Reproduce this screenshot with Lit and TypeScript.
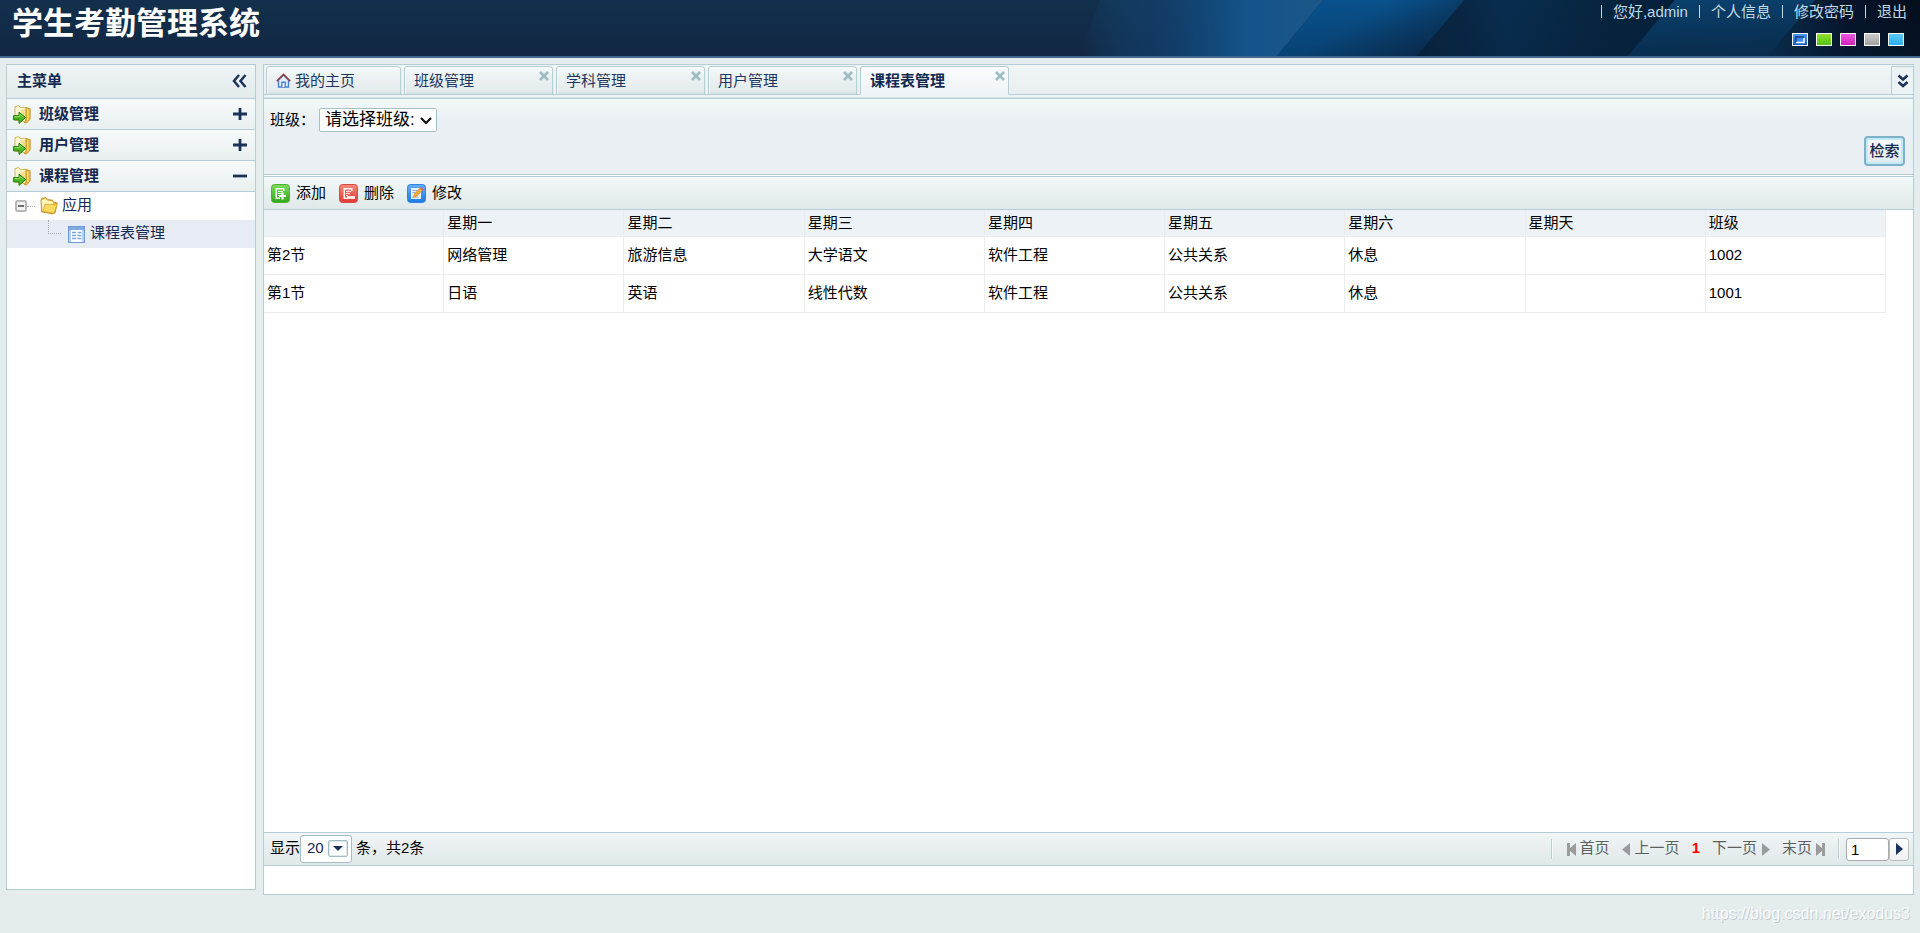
import { LitElement, html, css, svg } from "lit";
import { customElement, property, state } from "lit/decorators.js";
import { classMap } from "lit/directives/class-map.js";

const houseIcon = html`<svg width="15" height="15" viewBox="0 0 15 15" aria-hidden="true">
  <path d="M2.5 7v7h10V7l-5-5z" fill="#e3eefc" stroke="#4a7fd0" stroke-width="1.4" />
  <path d="M5.8 14V9.2h3.4V14" fill="#fff" stroke="#4a7fd0" stroke-width="1.4" />
  <path d="M.8 8.2 7.5 1.4l6.7 6.8" fill="none" stroke="#8c4448" stroke-width="1.7" />
</svg>`;

const sectionIcon = html`<svg width="19" height="19" viewBox="0 0 19 19" aria-hidden="true">
  <path d="M2 1.6 5.600.6l1.800 1.900 5.600-.2V17L2 15z" fill="#fdf6cf" stroke="#d3ae52" stroke-width=".9" />
  <path d="M13 2.400l4.200 1.400v10.200L13.600 18l-2.600-.6 2-1.800z" fill="#eab93a" stroke="#c2922c" stroke-width=".8" />
  <path d="M14.800 4.600v10.400" stroke="#fbe490" stroke-width="1.100" />
  <path d="M8 4.500h4v10H9z" fill="#f7e08a" />
  <path d="M.6 10.600h5.400V7.200l6.600 5.400-6.600 5.800v-3.500H.6z" fill="#4cb822" stroke="#267a10" />
  <path d="M1.400 11.500h5.400V9.300l3.600 3" fill="none" stroke="#98e268" stroke-width=".9" />
</svg>`;

const folderIcon = html`<svg width="19" height="18" viewBox="0 0 19 18" aria-hidden="true">
  <path d="M1 3 2 1.2l4-.6 1.600 2 5 .6.800 2 3.800.8-2 9.600-2.200 1.300-11.400-2z" fill="#e6b53f" stroke="#bd8a26" stroke-width=".9" />
  <path d="M1.600 3.200 5.600 1.600l1.500 2 6 1 .3 11.400-11-2z" fill="#fff6b8" />
  <path d="M5 7.200 14.400 7.600l3-1.400-3.200 10L3 14.400z" fill="#f9da5e" stroke="#cf9c2c" stroke-width=".7" />
</svg>`;

const tableIcon = html`<svg width="17" height="17" viewBox="0 0 17 17" aria-hidden="true">
  <rect x=".5" y=".5" width="16" height="16" fill="#fff" stroke="#6f9ad6" />
  <path d="M1 1h15v3H1z" fill="#7fabe4" />
  <path d="M1 4h2v12H1zM14 4h2v12h-2z" fill="#b4d0f2" />
  <path d="M4 6.5h4M9.5 6.5h4M4 9.5h4M9.5 9.5h4M4 12.5h4M9.5 12.5h4" stroke="#7da5dd" stroke-width="1.4" />
</svg>`;

const sheet = svg`<path d="M4.500 4h9v3H12V5.500H6v8h3V15H4.500z" fill="#fff" opacity=".92" />
  <path d="M7 7.500h5M7 9.500h4M7 11.500h2" stroke="#fff" stroke-width="1.200" opacity=".85" />`;

const actionIcons = {
  add: html`<svg width="19" height="19" viewBox="0 0 19 19" aria-hidden="true">
    <defs><linearGradient id="g" x2="0" y2="1"><stop stop-color="#7ddc5c" /><stop offset="1" stop-color="#2fa81c" /></linearGradient></defs>
    <rect x=".5" y=".5" width="18" height="18" rx="3" fill="url(#g)" stroke="#4db32e" />
    ${sheet}<path d="M11.500 8.500v7M8 12h7" stroke="#fff" stroke-width="2.200" />
  </svg>`,
  remove: html`<svg width="19" height="19" viewBox="0 0 19 19" aria-hidden="true">
    <defs><linearGradient id="r" x2="0" y2="1"><stop stop-color="#f68a7c" /><stop offset="1" stop-color="#de3a34" /></linearGradient></defs>
    <rect x=".5" y=".5" width="18" height="18" rx="3" fill="url(#r)" stroke="#dc4844" />
    ${sheet}<path d="M8 13.500h8" stroke="#fff" stroke-width="2.600" />
  </svg>`,
  edit: html`<svg width="19" height="19" viewBox="0 0 19 19" aria-hidden="true">
    <defs><linearGradient id="b" x2="0" y2="1"><stop stop-color="#62aef8" /><stop offset="1" stop-color="#1f7ae2" /></linearGradient></defs>
    <rect x=".5" y=".5" width="18" height="18" rx="3" fill="url(#b)" stroke="#2f83e4" />
    <path d="M4 4h10v11H4z" fill="#e6eef6" />
    <path d="M5.500 6.500h5M5.500 8.500h3M5.500 13h6" stroke="#8fb2d8" />
    <path d="m6.500 13.200.8-3.200 5.700-6 2.300 2.200-5.600 6z" fill="#f5ae35" stroke="#c9801f" stroke-width=".6" />
    <path d="m13 4.300 1.200-1.200 2.300 2.200-1.200 1.200z" fill="#e8605a" />
  </svg>`,
};

const closeIcon = html`<svg width="10" height="10" viewBox="0 0 10 10" aria-hidden="true">
  <path d="M1 1l8 8M9 1 1 9" stroke="#9dbcc4" stroke-width="2.600" />
</svg>`;

const triangle = (d: string) => html`<svg width="9" height="15" viewBox="0 0 9 15" aria-hidden="true"><path d=${d} fill="#9b9b9b" /></svg>`;

@customElement("site-header")
export class SiteHeader extends LitElement {
  @state() private theme = "深蓝";
  private links = ["您好,admin", "个人信息", "修改密码", "退出"];
  private themes = [
    ["深蓝", "blue"],
    ["绿色", "green"],
    ["粉色", "pink"],
    ["灰色", "gray"],
    ["天蓝", "sky"],
  ];

  static styles = css`
    :host { display: block; }
    header {
      position: relative; display: flex; justify-content: space-between; height: 58px; box-sizing: border-box;
      background: linear-gradient(#12304d, #122743); border-bottom: 2px solid #46688a; overflow: hidden;
    }
    .art { position: absolute; right: 0; top: 0; width: 840px; height: 56px; }
    h1 { position: relative; margin: 0; padding-left: 12px; font-size: 31px; line-height: 48px; font-weight: 700; color: #fff; }
    .side { position: relative; display: flex; flex-direction: column; align-items: flex-end; }
    nav { display: flex; align-items: center; padding-right: 13px; height: 22px; }
    a { color: #c0dbe6; text-decoration: none; font-size: 15px; padding: 0 11px; border-left: 1px solid #c0dbe6; line-height: 13px; }
    a:last-child { padding-right: 0; }
    .themes { display: flex; gap: 8px; padding: 11px 16px 0 0; }
    .swatch { width: 16px; height: 13px; padding: 0; border: 1px solid #fff; box-sizing: border-box; }
    .green { background: linear-gradient(#8ee02c, #55c012); }
    .pink { background: linear-gradient(#ee58e0, #cf22bb); }
    .gray { background: linear-gradient(#cccccc, #a0a0a0); }
    .sky { background: linear-gradient(#5cc8fb, #2badf2); }
    .blue { background: linear-gradient(#4f9cf4, #1659c4); }
    .swatch svg { display: block; }
  `;

  render() {
    return html`<header>
      <svg class="art" viewBox="0 0 840 56" aria-hidden="true">
        <defs>
          <linearGradient id="glow"><stop stop-color="#135a94" stop-opacity="0" /><stop offset=".3" stop-color="#124272" stop-opacity=".6" /><stop offset=".68" stop-color="#13548a" /><stop offset="1" stop-color="#1c5688" /></linearGradient>
          <linearGradient id="s1" x2="1" y2=".55"><stop stop-color="#08528f" /><stop offset=".5" stop-color="#09508a" /><stop offset="1" stop-color="#0a3054" /></linearGradient>
          <linearGradient id="s2"><stop stop-color="#08223a" /><stop offset=".35" stop-color="#092d4f" /><stop offset=".75" stop-color="#06243e" /><stop offset="1" stop-color="#061f38" /></linearGradient>
          <linearGradient id="s3" x2=".3" y2="1"><stop stop-color="#0a426f" /><stop offset="1" stop-color="#0a3358" /></linearGradient>
          <linearGradient id="s4"><stop stop-color="#0a3050" /><stop offset=".5" stop-color="#07142a" /><stop offset="1" stop-color="#050e1c" /></linearGradient>
          <linearGradient id="shade" x2="0" y2="1"><stop stop-color="#06203c" stop-opacity="0" /><stop offset="1" stop-color="#06203c" stop-opacity=".3" /></linearGradient>
        </defs>
        <path d="M20 0H243L197 56H0z" fill="url(#glow)" />
        <path d="M243 0H384L337 56H197z" fill="url(#s1)" />
        <path d="M384 0H595L548 56H337z" fill="url(#s2)" />
        <path d="M595 0H735L688 56H548z" fill="url(#s3)" />
        <path d="M735 0H840V56H688z" fill="url(#s4)" />
        <path d="M243 0H840V56H197z" fill="url(#shade)" />
      </svg>
      <h1>学生考勤管理系统</h1>
      <div class="side">
        <nav>${this.links.map((l) => html`<a href="#">${l}</a>`)}</nav>
        <div class="themes">
          ${this.themes.map(
            ([name, cls]) => html`<button
              class="swatch ${cls}"
              aria-label=${name}
              aria-pressed=${this.theme === name}
              @click=${() => (this.theme = name)}
            >${this.theme === name
              ? html`<svg width="14" height="11" viewBox="0 0 14 11"><path d="M3 3h8v5H3z" fill="#3b8af0" /><path d="M3 8V3h8" fill="none" stroke="#173f80" stroke-width="1.500" /><path d="M3 8.500h8V4" fill="none" stroke="#fff" stroke-width="1.500" /></svg>`
              : null}</button>`
          )}
        </div>
      </div>
    </header>`;
  }
}

@customElement("side-menu")
export class SideMenu extends LitElement {
  @state() private open = "课程管理";
  private sections = ["班级管理", "用户管理", "课程管理"];

  static styles = css`
    :host { display: flex; flex-direction: column; background: #fff; border: 1px solid #b5ced5; box-sizing: border-box; font-size: 15px; color: #14294f; }
    button { font: inherit; color: inherit; border: 0; background: none; padding: 0; }
    .title { display: flex; align-items: center; justify-content: space-between; height: 31px; padding: 0 8px 2px 10px; background: linear-gradient(#f0f5f6, #e2eaec); border-bottom: 1px solid #b5ced5; }
    h2 { margin: 0; font-size: 15px; font-weight: 700; line-height: 30px; }
    .fold, .sign { display: grid; place-items: center; }
    .section { display: flex; align-items: center; gap: 7px; width: 100%; height: 31px; padding: 0 8px 0 6px; box-sizing: border-box; background: linear-gradient(#f7fafb, #e9efef); border-bottom: 1px solid #b5ced5; font-weight: 700; line-height: 30px; }
    .sign { margin-left: auto; }
    ul { list-style: none; margin: 0; padding: 0; }
    .row { display: flex; align-items: center; height: 28px; line-height: 26px; color: #14294f; text-decoration: none; }
    .parent { padding-left: 8px; }
    .parent .dots { width: 8px; border-top: 1px dotted #b5b5b5; margin-right: 5px; }
    .parent .label { height: 28px; padding-left: 3px; }
    .child { background: #e7ebf3; padding-left: 41px; }
    .elbow { width: 12px; height: 13px; border-left: 1px dotted #aaa; border-bottom: 1px dotted #aaa; align-self: flex-start; margin-right: 7px; }
    .child .label { height: 28px; padding-left: 5px; }
  `;

  render() {
    return html`
      <div class="title">
        <h2>主菜单</h2>
        <button class="fold" aria-label="收起">
          <svg width="15" height="14" viewBox="0 0 15 14"><path d="M7 1 2 7l5 6M13.500 1l-5 6 5 6" fill="none" stroke="#1b3358" stroke-width="2.500" /></svg>
        </button>
      </div>
      ${this.sections.map((s) => {
        const on = this.open === s;
        return html`<button class="section" aria-expanded=${on} @click=${() => (this.open = s)}>
            ${sectionIcon}<span>${s}</span>
            <span class="sign"><svg width="14" height="14" viewBox="0 0 14 14"><path d=${on ? "M0 7h14" : "M0 7h14M7 1v12"} stroke="#1b3358" stroke-width="2.800" /></svg></span>
          </button>
          ${on
            ? html`<ul>
                <li>
                  <div class="row parent">
                    <svg width="12" height="12" viewBox="0 0 12 12"><rect x="1" y="1" width="10" height="10" rx="1" fill="#f4f4f4" stroke="#a3a3a3" stroke-width="1.500" /><path d="M3 6h6" stroke="#444" stroke-width="1.500" /></svg>
                    <span class="dots"></span>${folderIcon}<span class="label">应用</span>
                  </div>
                  <ul>
                    <li><a class="row child" href="#"><span class="elbow"></span>${tableIcon}<span class="label">课程表管理</span></a></li>
                  </ul>
                </li>
              </ul>`
            : null}`;
      })}
    `;
  }
}

@customElement("tab-strip")
export class TabStrip extends LitElement {
  @state() private active = "课程表管理";
  private tabs = ["班级管理", "学科管理", "用户管理", "课程表管理"];

  static styles = css`
    :host { display: block; font-size: 15px; background: linear-gradient(#f0f6f6, #e7edef); }
    .bar { display: flex; gap: 3px; height: 30px; padding: 1px 0 0 2px; box-sizing: border-box; box-shadow: inset 0 -1px #b5ced5; }
    .tab { position: relative; display: flex; width: 149px; box-sizing: border-box; border: 1px solid #b5ced5; border-radius: 3px 3px 0 0; background: linear-gradient(#f3f8f8, #e2e9eb); box-shadow: inset 1px 1px #ffffff99, inset 0 -2px #d6e3e6; }
    .home { width: 135px; }
    .on { background: linear-gradient(#fcfdfe, #edf3f6); border-bottom-color: #edf3f6; box-shadow: none; }
    .name { display: flex; align-items: center; gap: 4px; flex: 1; border: 0; background: none; padding: 0 9px; font: inherit; color: #1c3660; text-align: left; line-height: 27px; }
    .on .name { font-weight: 700; color: #14294f; }
    .close { position: absolute; right: 3px; top: 4px; border: 0; background: none; padding: 0; display: grid; }
    .more { margin-left: auto; width: 22px; border: 1px solid #b5ced5; border-right: 0; background: #edf2f4; padding: 0; display: grid; place-items: center; }
    .rule { height: 3px; background: #eef4f6; border-bottom: 1px solid #b5ced5; box-shadow: inset 0 -1px #d4e2e6; }
  `;

  render() {
    return html`<div class="bar" role="tablist">
        <div class="tab home"><button class="name" role="tab">${houseIcon}我的主页</button></div>
        ${this.tabs.map(
          (t) => html`<div class=${classMap({ tab: true, on: this.active === t })}>
            <button class="name" role="tab" aria-selected=${this.active === t} @click=${() => (this.active = t)}>${t}</button>
            <button class="close" aria-label="关闭${t}">${closeIcon}</button>
          </div>`
        )}
        <button class="more" aria-label="更多">
          <svg width="12" height="14" viewBox="0 0 12 14"><path d="M1.500 1.500 6 5.500l4.500-4M1.500 8 6 12l4.500-4" fill="none" stroke="#1b3358" stroke-width="2.600" /></svg>
        </button>
      </div>
      <div class="rule"></div>`;
  }
}

@customElement("timetable-grid")
export class TimetableGrid extends LitElement {
  @property({ attribute: false }) columns: string[] = [];
  @property({ attribute: false }) rows: string[][] = [];

  static styles = css`
    :host { display: block; flex: 1; padding-right: 27px; }
    table { width: 100%; table-layout: fixed; border-collapse: separate; border-spacing: 0; font-size: 15px; color: #000; }
    th, td { box-sizing: border-box; padding: 0 3px; text-align: left; font-weight: 400; border-right: 1px solid #ececec; border-bottom: 1px solid #ececec; }
    th { height: 27px; line-height: 26px; background: #edf2f6; }
    td { height: 38px; line-height: 34px; padding-bottom: 2px; }
  `;

  render() {
    return html`<table>
      <thead><tr>${this.columns.map((c) => html`<th scope="col">${c}</th>`)}</tr></thead>
      <tbody>${this.rows.map((r) => html`<tr>${r.map((c) => html`<td>${c}</td>`)}</tr>`)}</tbody>
    </table>`;
  }
}

@customElement("pager-bar")
export class PagerBar extends LitElement {
  static styles = css`
    :host { display: flex; align-items: center; justify-content: space-between; height: 34px; box-sizing: border-box; padding: 0 4px 0 6px; font-size: 15px; line-height: 22px; color: #000; border: solid #b5ced5; border-width: 1px 0; background: linear-gradient(#f0f5f6, #e0e8ea); }
    .size, .pages, .go { display: flex; align-items: center; }
    .size label, .size .total { padding-bottom: 2px; }
    .pick { position: relative; display: flex; margin-right: 4px; }
    select { appearance: none; width: 52px; height: 28px; box-sizing: border-box; padding: 0 0 2px 6px; border: 1px solid #a5bcc3; border-radius: 3px; background: #fff; font: inherit; color: #14294f; }
    .arrow { position: absolute; right: 4px; top: 5px; width: 20px; height: 17px; box-sizing: border-box; border: 1px solid #9fbcc4; border-radius: 2px; box-shadow: inset 0 0 0 1px #d9e7ea; display: grid; place-items: center; background: #fff; pointer-events: none; }
    .pages { color: #5f5f5f; }
    .pages a { display: flex; align-items: center; gap: 4px; color: inherit; text-decoration: none; margin-right: 12px; }
    .pages a span, .pages b { padding-bottom: 2px; }
    .pages .last { margin-right: 13px; }
    .pages b { color: #f00; margin-right: 12px; }
    .bar { width: 1px; height: 20px; background: #b5ced5; box-shadow: 1px 0 #f5f9fa; }
    .bar.start { margin-right: 15px; }
    .bar.end { margin-right: 7px; }
    input { width: 43px; height: 23px; box-sizing: border-box; padding: 0 4px; border: 1px solid #a9a9a9; border-radius: 3px; font: inherit; background: #fff; color: #000; }
    .go button { width: 20px; height: 23px; padding: 0; border: 1px solid #bcbcbc; border-radius: 3px; background: linear-gradient(#fff, #eef0f3); display: grid; place-items: center; }
  `;

  render() {
    return html`<div class="size">
        <label for="size">显示</label>
        <span class="pick">
          <select id="size"><option>20</option><option>50</option><option>100</option></select>
          <span class="arrow"><svg width="10" height="5" viewBox="0 0 10 5"><path d="M0 0h10L5 5z" fill="#1b3358" /></svg></span>
        </span>
        <span class="total">条，共2条</span>
      </div>
      <div class="pages">
        <span class="bar start"></span>
        <a href="#">${triangle("M0 1h3v5L9 1v13L3 9v5H0z")}<span>首页</span></a>
        <a href="#">${triangle("M8 1v13L0 7.500z")}<span>上一页</span></a>
        <b>1</b>
        <a href="#"><span>下一页</span>${triangle("M1 1v13l8-6.500z")}</a>
        <a class="last" href="#"><span>末页</span>${triangle("M0 1l6 5V1H9v13H6V9L0 14z")}</a>
        <span class="bar end"></span>
        <form class="go" @submit=${(e: Event) => e.preventDefault()}>
          <input aria-label="页码" .value=${"1"} />
          <button aria-label="跳转"><svg width="8" height="12" viewBox="0 0 8 12"><path d="M1 0v12l7-6z" fill="#1b3358" /></svg></button>
        </form>
      </div>`;
  }
}

@customElement("app-root")
export class AppRoot extends LitElement {
  private columns = ["", "星期一", "星期二", "星期三", "星期四", "星期五", "星期六", "星期天", "班级"];
  private rows = [
    ["第2节", "网络管理", "旅游信息", "大学语文", "软件工程", "公共关系", "休息", "", "1002"],
    ["第1节", "日语", "英语", "线性代数", "软件工程", "公共关系", "休息", "", "1001"],
  ];

  static styles = css`
    :host { position: relative; display: flex; flex-direction: column; min-height: 100vh; background: #e4ecee; font-family: "Liberation Sans", "Noto Sans CJK SC", sans-serif; font-size: 15px; }
    .body { flex: 1; display: flex; gap: 7px; padding: 6px 6px 38px; }
    side-menu { width: 250px; flex: none; margin-bottom: 5px; }
    main { flex: 1; min-width: 0; display: flex; flex-direction: column; background: #fff; border: 1px solid #b5ced5; }
    .filter { display: flex; flex-direction: column; height: 76px; box-sizing: border-box; padding: 9px 8px 8px 6px; border-bottom: 1px solid #b5ced5; background: linear-gradient(#f3f8f8, #eaeff4 22px); }
    .field { display: flex; align-items: center; gap: 4px; line-height: 24px; }
    .pick { position: relative; display: flex; }
    select { appearance: none; width: 118px; height: 24px; box-sizing: border-box; padding: 0 0 0 5px; border: 1px solid #a5c0c8; border-radius: 2px; background: #fff; font: 17px "Liberation Sans", "Noto Sans CJK SC", sans-serif; line-height: 22px; color: #000; }
    .pick svg { position: absolute; right: 5px; top: 9px; pointer-events: none; }
    .search { align-self: flex-end; margin-top: auto; width: 41px; height: 30px; padding: 0 0 4px; border: 2px solid #7db2c8; border-radius: 4px; background: linear-gradient(#f6fafb, #dfe9ec); box-shadow: inset 0 0 0 2px #c0eaf5; font: inherit; font-weight: 500; color: #14294f; }
    .actions { display: flex; align-items: center; gap: 13px; height: 34px; box-sizing: border-box; margin-top: 1px; padding: 0 7px; border: solid #b5ced5; border-width: 1px 0; background: linear-gradient(#f3f8f8, #e0e8ea); }
    .actions button { display: flex; align-items: center; gap: 6px; border: 0; padding: 0; background: none; font: inherit; line-height: 30px; color: #000; }
    .tail { height: 28px; }
    .mark { position: absolute; right: 10px; bottom: 8px; font-size: 16px; line-height: 22px; color: #f8fafa; text-shadow: 1px 1px #c3cccf; }
  `;

  render() {
    return html`<site-header></site-header>
      <div class="body">
        <side-menu></side-menu>
        <main>
          <tab-strip></tab-strip>
          <div class="filter">
            <div class="field">
              <label for="cls">班级：</label>
              <span class="pick">
                <select id="cls"><option>请选择班级:</option><option>1001</option><option>1002</option></select>
                <svg width="12" height="8" viewBox="0 0 12 8" aria-hidden="true"><path d="M1 1l5 5 5-5" fill="none" stroke="#111" stroke-width="2.200" /></svg>
              </span>
            </div>
            <button class="search">检索</button>
          </div>
          <div class="actions">
            <button>${actionIcons.add}添加</button>
            <button>${actionIcons.remove}删除</button>
            <button>${actionIcons.edit}修改</button>
          </div>
          <timetable-grid .columns=${this.columns} .rows=${this.rows}></timetable-grid>
          <pager-bar></pager-bar>
          <div class="tail"></div>
        </main>
      </div>
      <span class="mark">https://blog.csdn.net/exodus3</span>`;
  }
}
